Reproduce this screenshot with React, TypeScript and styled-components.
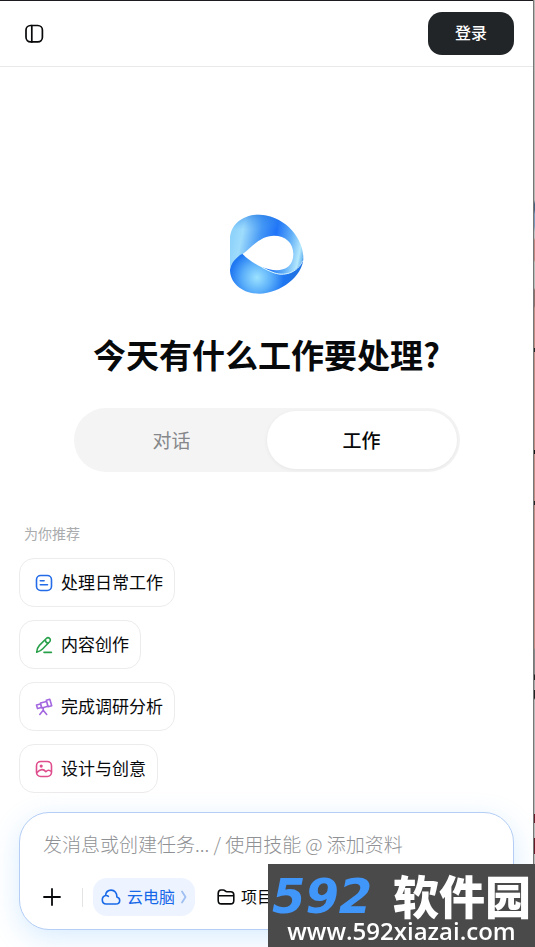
import React from "react";
import styled, { createGlobalStyle, css } from "styled-components";

const GlobalStyle = createGlobalStyle`
  *, *::before, *::after { box-sizing: border-box; }
  body {
    margin: 0;
    background: #fff;
    color: #08090b;
    font-family: "Noto Sans CJK SC", "Noto Sans", sans-serif;
  }
  button, input { font: inherit; color: inherit; }
`;

const Shell = styled.div`
  display: flex;
  min-height: 100vh;
  overflow: hidden;
`;

const Page = styled.div`
  flex: 1;
  min-width: 0;
  display: flex;
  flex-direction: column;
  overflow: hidden;
  border-top: 1px solid #1d1b20;
`;

const WindowEdge = styled.div`
  width: 2px;
  border-left: 1px solid #777;
  background: linear-gradient(
    #b9b7b2 0 200px, #47617f 204px 210px, #7d9abc 214px 226px, #c0c2c2 232px 238px,
    #c08a82 240px 260px, #b9bdb9 262px 288px, #92706b 290px 306px, #bf8d84 308px 348px,
    #222 348px 352px, #bf8d84 352px 450px, #111 450px 454px, #bf8d84 454px 501px,
    #222 501px 505px, #bf8d84 505px 648px, #888 650px 674px, #222 675px 680px,
    #aaa 680px 690px, #222 690px 698px, #b8b8b8 700px 814px, #651c28 814px 823px,
    #bbb 823px 838px, #651c28 838px 854px, #bbb 854px
  );
`;

const Header = styled.header`
  display: flex;
  align-items: center;
  justify-content: space-between;
  height: 66px;
  padding: 0 19px 0 24px;
  border-bottom: 1px solid #e9e9ea;
`;

const IconButton = styled.button`
  display: inline-flex;
  padding: 0;
  border: 0;
  background: none;
  cursor: pointer;
`;

const LoginButton = styled.button`
  width: 86px;
  height: 43px;
  padding: 0 0 3px;
  border: 0;
  border-radius: 14px;
  background: #212528;
  color: #fff;
  font-size: 16px;
  font-weight: 500;
  cursor: pointer;
`;

const Main = styled.main`
  flex: 1;
  display: flex;
  flex-direction: column;
`;

const Hero = styled.section`
  flex: 1;
  display: flex;
  flex-direction: column;
  align-items: center;
  justify-content: flex-end;
  padding: 0 24px;
`;

const Title = styled.h1`
  margin: 35px 0 29px;
  font-size: 33px;
  line-height: 50px;
  font-weight: 700;
  white-space: nowrap;
`;

const Tabs = styled.div`
  display: grid;
  grid-template-columns: 1fr 1fr;
  width: 80%;
  max-width: 386px;
  height: 64px;
  padding: 3px;
  border-radius: 32px;
  background: #f4f4f4;
`;

const Tab = styled.button<{ $active?: boolean }>`
  padding: 0 0 2px;
  border: 0;
  border-radius: 29px;
  background: transparent;
  color: #85878a;
  font-size: 19px;
  cursor: pointer;
  ${(p) =>
    p.$active &&
    css`
      background: #fff;
      color: #08090b;
      font-weight: 500;
      box-shadow: 0 1px 4px rgba(0, 0, 0, 0.06);
    `}
`;

const Suggestions = styled.section`
  display: flex;
  flex-direction: column;
  align-items: flex-start;
  gap: 13px;
  padding: 51px 19px 19px;
`;

const SuggestionsLabel = styled.h2`
  margin: 0 0 2px 5px;
  color: #a9abad;
  font-size: 14px;
  line-height: 20px;
  font-weight: 400;
`;

const Chip = styled.button`
  display: inline-flex;
  align-items: center;
  gap: 8px;
  height: 49px;
  padding: 0 11px 0 15px;
  border: 1px solid #ececed;
  border-radius: 15px;
  background: #fff;
  font-size: 17px;
  cursor: pointer;
`;

const ChipLabel = styled.span`
  padding-bottom: 3px;
`;

const Composer = styled.form`
  margin: 0 19px 17px;
  height: 118px;
  padding: 14px 20px 13px 23px;
  display: flex;
  flex-direction: column;
  justify-content: space-between;
  border: 1px solid #b4cef5;
  border-radius: 30px;
  background: #fff;
  box-shadow: 0 8px 28px rgba(90, 175, 255, 0.24);
`;

const Prompt = styled.input`
  width: 100%;
  height: 32px;
  padding: 0;
  border: 0;
  outline: 0;
  background: none;
  font-size: 19px;
  font-weight: 300;
  &::placeholder { color: #8f9194; opacity: 1; }
`;

const Toolbar = styled.div`
  display: flex;
  align-items: center;
  height: 38px;
`;

const Divider = styled.span`
  width: 1px;
  height: 19px;
  margin: 0 10px 0 21px;
  background: #e2e3e5;
`;

const ToolButton = styled.button<{ $accent?: boolean }>`
  display: inline-flex;
  align-items: center;
  gap: 6px;
  height: 38px;
  padding: 0 8px;
  border: 0;
  border-radius: 14px;
  background: ${(p) => (p.$accent ? "#edf4ff" : "transparent")};
  color: ${(p) => (p.$accent ? "#1768e8" : "#08090b")};
  font-size: 16px;
  white-space: nowrap;
  cursor: pointer;
  & + & { margin-left: 14px; }
`;

const ToolLabel = styled.span`
  padding-bottom: 2px;
`;

const Watermark = styled.a`
  position: fixed;
  right: 0;
  bottom: 0;
  width: 267px;
  padding: 7px 4px 3px;
  background: #4b4a4b;
  color: #fff;
  text-decoration: none;
`;

const WatermarkName = styled.div`
  display: flex;
  align-items: center;
  justify-content: space-between;
  height: 46px;
  font-size: 46px;
  line-height: 46px;
  font-weight: 900;
  white-space: nowrap;
`;

const WatermarkDigits = styled.span`
  padding-top: 4px;
  color: #4196fa;
  font-family: "DejaVu Sans", sans-serif;
  font-size: 48px;
  font-style: italic;
  font-weight: 700;
`;

const WatermarkUrl = styled.div`
  font-family: "Open Sans", "Noto Sans", sans-serif;
  font-size: 24px;
  line-height: 27px;
  font-weight: 600;
  text-align: center;
`;

const line = {
  fill: "none",
  stroke: "currentColor",
  strokeLinecap: "round" as const,
  strokeLinejoin: "round" as const,
  "aria-hidden": true,
};

const SidebarIcon = () => (
  <svg width="20" height="20" viewBox="0 0 20 20" strokeWidth="1.7" {...line}>
    <rect x="2" y="1.5" width="16.4" height="16.4" rx="4.6" />
    <path d="M7.8 1.5v16.4" />
  </svg>
);

const TaskIcon = () => (
  <svg width="18" height="18" viewBox="0 0 18 18" strokeWidth="1.6" {...line} stroke="#236be7">
    <rect x="1.5" y="1.5" width="15" height="15" rx="4.2" />
    <path d="M5.3 6.7h3.8M5.3 10.7h7.2" />
  </svg>
);

const PenIcon = () => (
  <svg width="18" height="18" viewBox="0 0 18 18" strokeWidth="1.6" {...line} stroke="#29a04a">
    <path d="M1.7 16.3c.2-2.6.9-5 2.7-6.9l6.9-6.9c1-1 2.3-1 3.3-.1s1 2.3 0 3.4l-6.8 7c-1.7 1.8-3.6 2.8-6.1 3.5ZM10.2 3.9c.2 2 1.2 3.1 3.1 3.4M9 16.4h7.4" />
  </svg>
);

const TelescopeIcon = () => (
  <svg width="18" height="18" viewBox="0 0 18 18" strokeWidth="1.6" {...line} stroke="#a367df">
    <path d="m11.3 2.2 3.5-1 1.9 6.6-3.5 1ZM5.5 5.1l6-1.7 1.4 4.9-6 1.7ZM1.5 7l4-1.1 1 3.6-4 1.1ZM8.2 10.2v2.1M4.8 16.4l3.4-4.1 3.5 4.1" />
  </svg>
);

const ImageIcon = () => (
  <svg width="18" height="18" viewBox="0 0 18 18" strokeWidth="1.6" {...line} stroke="#df4d8c">
    <rect x="1.5" y="1.5" width="15" height="15" rx="4.2" />
    <path d="M1.8 12.7c3.5-4 6.8-3.8 9.1-1 1.8-2 3.6-1.9 5.4-.2" />
    <circle cx="6.2" cy="6.1" r=".8" fill="#df4d8c" />
  </svg>
);

const PlusIcon = () => (
  <svg width="18" height="18" viewBox="0 0 18 18" strokeWidth="1.8" {...line}>
    <path d="M9 1v16M1 9h16" />
  </svg>
);

const CloudIcon = () => (
  <svg width="20" height="18" viewBox="0 0 20 18" strokeWidth="1.6" {...line}>
    <path d="M5.2 16h9.5c2.3 0 4-1.5 4-3.6 0-1.7-1.1-3-2.8-3.5.1-4.1-2.4-6.8-5.7-6.8-3.4 0-5.4 2.3-5.6 5.4C2.6 8 1.3 9.7 1.3 11.8 1.3 14.3 2.9 16 5.2 16ZM4.6 7.5c1.2-.2 2 .1 2.8.8" />
  </svg>
);

const ChevronIcon = () => (
  <svg width="6" height="14" viewBox="0 0 6 14" strokeWidth="1.8" {...line} stroke="#9fbff2">
    <path d="M1 1.5 4.5 7 1 12.5" />
  </svg>
);

const FolderIcon = () => (
  <svg width="18" height="18" viewBox="0 0 18 18" strokeWidth="1.6" {...line}>
    <path d="M1.2 12.5v-7C1.2 3.2 2.1 2 4 2h2.2c2 0 1.8 1.8 3.8 1.8h3.6c2 0 3.2 1.1 3.2 3.1v5.6c0 2.3-1.1 3.4-3.2 3.4H4.4c-2.1 0-3.2-1.1-3.2-3.4ZM1.2 7.8h15.6" />
  </svg>
);

const ringPath =
  "M64 220V130C64 88 102 57 150 57c70 0 134 63 134 130-2 28-34 53-74 48-15-2-35-11-50-21 40 17 94 15 94-39 0-34-24-55-58-55-42 0-71 38-93 54-21 14-37 30-39 46Z";

const Logo = () => (
  <svg width="75" height="80" viewBox="61 55 225 240" role="img" aria-label="Logo">
    <defs>
      <linearGradient id="ring" gradientUnits="userSpaceOnUse" x1="64" y1="160" x2="284" y2="205">
        <stop offset="0" stopColor="#8fd3fb" />
        <stop offset=".12" stopColor="#9fdcfc" />
        <stop offset=".36" stopColor="#4598f5" />
        <stop offset=".56" stopColor="#1f73f8" />
        <stop offset=".76" stopColor="#5fadf7" />
        <stop offset=".92" stopColor="#b4e8fd" />
        <stop offset="1" stopColor="#4ba1ed" />
      </linearGradient>
      <linearGradient id="topShade" x1="0" y1="0" x2="0" y2="1">
        <stop offset="0" stopColor="#1a6fdf" stopOpacity=".5" />
        <stop offset=".25" stopColor="#3c9af8" stopOpacity="0" />
      </linearGradient>
      <radialGradient id="base" gradientUnits="userSpaceOnUse" cx="145" cy="246" r="110">
        <stop offset="0" stopColor="#9ce2ff" />
        <stop offset=".38" stopColor="#5db1fa" />
        <stop offset=".73" stopColor="#1f77f2" />
        <stop offset="1" stopColor="#1f73e4" />
      </radialGradient>
    </defs>
    <path fill="url(#ring)" d={ringPath} />
    <path fill="url(#topShade)" d={ringPath} />
    <path fill="url(#base)" d="M64 222c3-21 20-38 37-48 23 25 56 41 88 55 36 17 80 3 95-41-1 53-69 106-132 106-50 0-88-31-88-72Z" />
    <path d="M160 215c11 6 20 10 30 14 36 16 77 2 92-34" fill="none" stroke="#d6f5ff" strokeWidth="3" />
  </svg>
);

const suggestions = [
  { label: "处理日常工作", icon: <TaskIcon /> },
  { label: "内容创作", icon: <PenIcon /> },
  { label: "完成调研分析", icon: <TelescopeIcon /> },
  { label: "设计与创意", icon: <ImageIcon /> },
];

export default function App() {
  const [mode, setMode] = React.useState("work");
  return (
    <>
      <GlobalStyle />
      <Shell>
        <Page>
          <Header>
            <IconButton aria-label="侧边栏"><SidebarIcon /></IconButton>
            <LoginButton>登录</LoginButton>
          </Header>
          <Main>
            <Hero>
              <Logo />
              <Title>今天有什么工作要处理?</Title>
              <Tabs role="tablist">
                <Tab role="tab" aria-selected={mode === "chat"} $active={mode === "chat"} onClick={() => setMode("chat")}>对话</Tab>
                <Tab role="tab" aria-selected={mode === "work"} $active={mode === "work"} onClick={() => setMode("work")}>工作</Tab>
              </Tabs>
            </Hero>
            <Suggestions>
              <SuggestionsLabel>为你推荐</SuggestionsLabel>
              {suggestions.map((s) => (
                <Chip key={s.label}>{s.icon}<ChipLabel>{s.label}</ChipLabel></Chip>
              ))}
            </Suggestions>
            <Composer onSubmit={(e) => e.preventDefault()}>
              <Prompt aria-label="消息" placeholder="发消息或创建任务... / 使用技能 @ 添加资料" />
              <Toolbar>
                <IconButton type="button" aria-label="添加"><PlusIcon /></IconButton>
                <Divider />
                <ToolButton type="button" $accent><CloudIcon /><ToolLabel>云电脑</ToolLabel><ChevronIcon /></ToolButton>
                <ToolButton type="button"><FolderIcon /><ToolLabel>项目</ToolLabel></ToolButton>
              </Toolbar>
            </Composer>
          </Main>
        </Page>
        <WindowEdge />
      </Shell>
      <Watermark href="#">
        <WatermarkName>
          <WatermarkDigits>592</WatermarkDigits>
          <span>软件园</span>
        </WatermarkName>
        <WatermarkUrl>www.592xiazai.com</WatermarkUrl>
      </Watermark>
    </>
  );
}
